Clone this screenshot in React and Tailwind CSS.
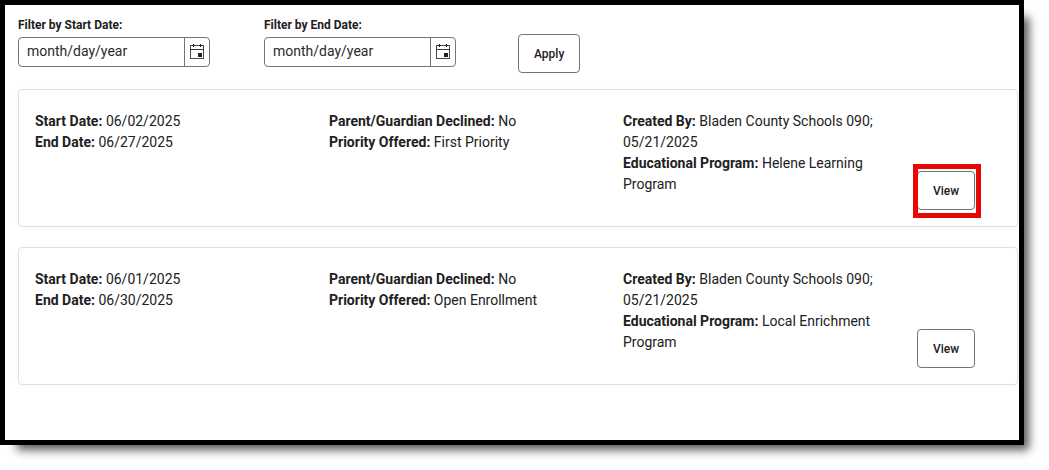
import { useState } from "react"

const programs = [
  {
    id: 1,
    startDate: "06/02/2025",
    endDate: "06/27/2025",
    declined: "No",
    priority: "First Priority",
    createdBy: "Bladen County Schools 090; 05/21/2025",
    program: "Helene Learning Program",
    highlighted: true,
  },
  {
    id: 2,
    startDate: "06/01/2025",
    endDate: "06/30/2025",
    declined: "No",
    priority: "Open Enrollment",
    createdBy: "Bladen County Schools 090; 05/21/2025",
    program: "Local Enrichment Program",
    highlighted: false,
  },
]

const CalendarIcon = () => (
  <svg className="w-4 h-4" viewBox="0 0 16 16" fill="none" aria-hidden="true" shapeRendering="crispEdges">
    <path d="M1.5 1.5h13v13h-13z" stroke="#4a4a4a" />
    <path d="M1 5.5h14" stroke="#3a3a3a" />
    <path d="M4 0h1v3H4zM11 0h1v3h-1zM3 1h3v1H3zM10 1h3v1h-3z" fill="#222" />
    <path d="M9 9h4v4H9z" fill="#222" />
  </svg>
)

const DateField = ({ id, label }) => {
  const [value, setValue] = useState("")

  return (
    <div className="w-48">
      <label htmlFor={id} className="block text-[12px] leading-4 font-bold mb-1">{label}</label>
      <div className="flex h-[30px] border border-[#757575] rounded-[4px] bg-white">
        <input
          id={id}
          type="text"
          className="flex-1 min-w-0 px-2 pb-[3px] text-[14px] leading-5 outline-none placeholder:text-[#2a2a2a]"
          placeholder="month/day/year"
          value={value}
          onChange={(e) => setValue(e.target.value)} />
        <button
          type="button"
          aria-label="Open calendar"
          className="flex items-center justify-center w-[25px] border-l border-[#757575]"
        >
          <CalendarIcon />
        </button>
      </div>
    </div>
  )
}

const OutlineButton = ({ children }) => (
  <button
    type="button"
    className="h-[39px] px-[15px] border border-[#757575] rounded-[4px] bg-white text-[12px] leading-4 font-medium"
  >
    {children}
  </button>
)

const Field = ({ label, value }) => (
  <p><strong className="font-bold">{label}:</strong> {value}</p>
)

const ProgramCard = ({ item }) => (
  <section className="grid grid-cols-[1fr_1fr_1fr_84px] px-4 pt-[21px] pb-4 border border-[#e0e0e0] rounded-[4px] bg-white shadow-[0_1px_4px_rgba(0,0,0,0.03)]">
    <div>
      <Field label="Start Date" value={item.startDate} />
      <Field label="End Date" value={item.endDate} />
    </div>
    <div>
      <Field label="Parent/Guardian Declined" value={item.declined} />
      <Field label="Priority Offered" value={item.priority} />
    </div>
    <div className="pr-4 pb-[15px]">
      <Field label="Created By" value={item.createdBy} />
      <Field label="Educational Program" value={item.program} />
    </div>
    <div className="relative self-end justify-self-start flex">
      <OutlineButton>View</OutlineButton>
      {item.highlighted && (
        <div className="absolute -top-[7px] -left-1 -right-[6px] -bottom-2 border-5 border-[#e80707] pointer-events-none" />
      )}
    </div>
  </section>
)

export default function App() {
  return (
    <div className="flex min-h-screen pr-[25px] pb-[25px] bg-white">
      <main className="flex-1 border-5 border-black bg-white pl-[13px] pr-px pt-3 pb-4 shadow-[11px_11px_9px_-6px_rgba(0,0,0,0.65)] font-['Roboto',sans-serif] text-[14px] leading-[21px] text-[#212121]">
        <form className="flex items-end mb-4">
          <div className="flex gap-[54px] pb-[6px]">
            <DateField id="start-date" label="Filter by Start Date:" />
            <DateField id="end-date" label="Filter by End Date:" />
          </div>
          <div className="flex ml-[62px]">
            <OutlineButton>Apply</OutlineButton>
          </div>
        </form>
        <div className="flex flex-col gap-5">
          {programs.map((item) => (
            <ProgramCard key={item.id} item={item} />
          ))}
        </div>
      </main>
    </div>
  )
}
